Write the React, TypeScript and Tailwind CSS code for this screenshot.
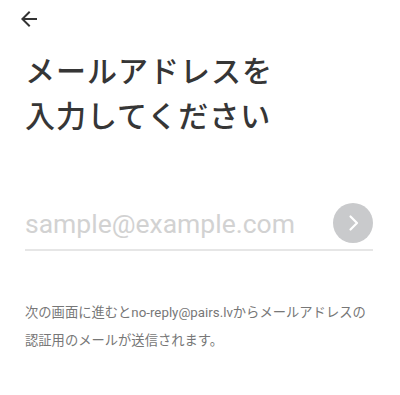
import { useState } from 'react';

export default function App() {
  const [email, setEmail] = useState('');

  return (
    <div
      className="w-[400px] h-[395px] bg-white flex flex-col"
      style={{ fontFamily: 'Roboto, "Noto Sans CJK JP", sans-serif' }}
    >
      <div className="h-[38px] flex items-center pl-[17px]">
        <button className="w-6 h-6 flex items-center justify-center text-[#333]">
          <svg viewBox="0 0 24 24" className="w-[26px] h-[26px]" fill="currentColor">
            <path d="M20 11H7.83l5.59-5.59L12 4l-8 8 8 8 1.41-1.41L7.83 13H20v-2z" />
          </svg>
        </button>
      </div>

      <h1 className="mt-[11px] px-[25px] text-[30px] leading-[45px] font-medium text-[#363636] tracking-[1px]">
        メールアドレスを
        <br />
        入力してください
      </h1>

      <div className="mt-[62px] ml-[25px] mr-[27px] flex items-center gap-3 border-b-2 border-[#e6e6e6] pb-[5px]">
        <input
          value={email}
          onChange={(e) => setEmail(e.target.value)}
          placeholder="sample@example.com"
          className="flex-1 min-w-0 text-[26.5px] leading-[40px] pt-[3px] text-[#333] placeholder:text-[#d2d2d2] outline-none bg-transparent"
        />
        <button className="w-10 h-10 rounded-full bg-[#c9cacc] flex items-center justify-center">
          <svg viewBox="0 0 24 24" className="w-6 h-6" fill="none" stroke="white" strokeWidth="2.2" strokeLinecap="round" strokeLinejoin="round">
            <path d="M9.5 5.5l6.5 6.5-6.5 6.5" />
          </svg>
        </button>
      </div>

      <p className="mt-[48px] px-[25px] text-[13.3px] leading-[28px] text-[#777]">
        次の画面に進むとno-reply@pairs.lvからメールアドレスの
        <br />
        認証用のメールが送信されます。
      </p>
    </div>
  );
}
